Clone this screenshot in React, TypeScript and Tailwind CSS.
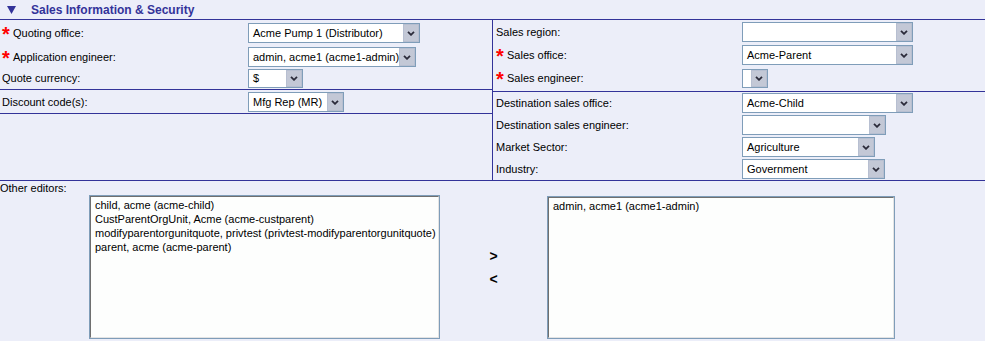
import React from 'react';

type SelProps = { cls: string; value?: string };

const Chevron = () => (
  <svg width="8" height="5" viewBox="0 0 8 5" className="block">
    <polyline points="1,0.8 4,3.8 7,0.8" fill="none" stroke="#2b2b3a" strokeWidth="1.8" />
  </svg>
);

const Sel: React.FC<SelProps> = ({ cls, value }) => (
  <div className={`flex shrink-0 border border-[#7f9db9] bg-white ${cls}`}>
    <div className="flex-1 min-w-0 flex items-center pl-[4px] text-[11px] leading-none whitespace-nowrap overflow-hidden text-black">
      {value}
    </div>
    <div className="w-[16px] shrink-0 flex items-center justify-center border border-[#b7bfd1] bg-[#c3c8d6]">
      <Chevron />
    </div>
  </div>
);

type RowProps = { label: string; req?: boolean; lw: string; cls?: string; children: React.ReactNode };

const Row: React.FC<RowProps> = ({ label, req, lw, cls = '', children }) => (
  <div className={`flex items-center ${cls}`}>
    <div className={`${lw} shrink-0 flex items-center text-[11px] text-black whitespace-nowrap`}>
      {req && (
        <span className="w-[11px] self-start h-[14px] -mt-[1px] text-[20px] leading-[20px] font-bold text-[#ff0000]">*</span>
      )}
      <span>{label}</span>
    </div>
    {children}
  </div>
);

const leftEditors = [
  'child, acme (acme-child)',
  'CustParentOrgUnit, Acme (acme-custparent)',
  'modifyparentorgunitquote, privtest (privtest-modifyparentorgunitquote)',
  'parent, acme (acme-parent)',
];

const ListBox: React.FC<{ cls: string; items: string[] }> = ({ cls, items }) => (
  <div className={`border border-[#7f9db9] shrink-0 flex ${cls}`}>
    <div className="flex-1 border-t border-l border-[#6f6f6f] border-r border-b border-r-[#e4e4e4] border-b-[#e4e4e4] bg-[#fdfefd] pl-[4px] pt-[1px] text-[11px] leading-[14px] text-black">
      {items.map(t => (
        <div key={t} className="whitespace-nowrap">{t}</div>
      ))}
    </div>
  </div>
);

export default function App() {
  return (
    <div className="w-[985px] h-[341px] overflow-hidden bg-[#eceef9] font-['Liberation_Sans',Arial,sans-serif]">
      {/* section header */}
      <div className="h-[20px] border-b border-[#333399] flex items-center">
        <svg width="9" height="8" viewBox="0 0 9 8" className="ml-[7px] mt-[1px]">
          <polygon points="0,0 9,0 4.5,8" fill="#333399" />
        </svg>
        <span className="ml-[15px] text-[12px] font-bold text-[#333399] leading-none">Sales Information &amp; Security</span>
      </div>

      <div className="flex border-b border-[#333399]">
        {/* left */}
        <div className="w-[493px] border-r border-[#333399] flex flex-col">
          <div className="pt-[3px] pb-[1px] border-b border-[#333399] pl-[2px]">
            <Row label="Quoting office:" req lw="w-[246px]" cls="h-[20px]">
              <Sel cls="w-[172px] h-[20px]" value="Acme Pump 1 (Distributor)" />
            </Row>
            <Row label="Application engineer:" req lw="w-[246px]" cls="h-[20px] mt-[4px]">
              <Sel cls="w-[168px] h-[20px]" value="admin, acme1 (acme1-admin)" />
            </Row>
            <Row label="Quote currency:" lw="w-[246px]" cls="h-[19px] mt-[2px]">
              <Sel cls="w-[55px] h-[19px]" value="$" />
            </Row>
          </div>
          <div className="pt-[2px] pb-[1px] border-b border-[#333399] pl-[2px]">
            <Row label="Discount code(s):" lw="w-[246px]" cls="h-[20px]">
              <Sel cls="w-[96px] h-[20px]" value="Mfg Rep (MR)" />
            </Row>
          </div>
          <div className="flex-1" />
        </div>

        {/* right */}
        <div className="flex-1 flex flex-col">
          <div className="pt-[2px] pb-[3px] border-b border-[#333399] pl-[3px]">
            <Row label="Sales region:" lw="w-[246px]" cls="h-[20px]">
              <Sel cls="w-[171px] h-[20px]" />
            </Row>
            <Row label="Sales office:" req lw="w-[246px]" cls="h-[20px] mt-[3px]">
              <Sel cls="w-[171px] h-[20px]" value="Acme-Parent" />
            </Row>
            <Row label="Sales engineer:" req lw="w-[246px]" cls="h-[19px] mt-[4px]">
              <Sel cls="w-[26px] h-[19px]" />
            </Row>
          </div>
          <div className="pt-[1px] pb-[1px] pl-[3px]">
            <Row label="Destination sales office:" lw="w-[246px]" cls="h-[20px]">
              <Sel cls="w-[171px] h-[20px]" value="Acme-Child" />
            </Row>
            <Row label="Destination sales engineer:" lw="w-[246px]" cls="h-[20px] mt-[2px]">
              <Sel cls="w-[144px] h-[20px]" />
            </Row>
            <Row label="Market Sector:" lw="w-[246px]" cls="h-[20px] mt-[2px]">
              <Sel cls="w-[133px] h-[20px]" value="Agriculture" />
            </Row>
            <Row label="Industry:" lw="w-[246px]" cls="h-[20px] mt-[2px]">
              <Sel cls="w-[143px] h-[20px]" value="Government" />
            </Row>
          </div>
        </div>
      </div>

      {/* other editors */}
      <div className="pt-[1px] h-[14px] text-[11px] leading-[13px] text-black">Other editors:</div>
      <div className="flex pl-[89px]">
        <ListBox cls="w-[351px] h-[144px]" items={leftEditors} />
        <div className="w-[107px] shrink-0 flex flex-col items-center pt-[50px] text-[14px] font-bold leading-[23px] text-black">
          <span>&gt;</span>
          <span>&lt;</span>
        </div>
        <ListBox cls="w-[348px] h-[143px] mt-[1px]" items={['admin, acme1 (acme1-admin)']} />
      </div>
    </div>
  );
}
